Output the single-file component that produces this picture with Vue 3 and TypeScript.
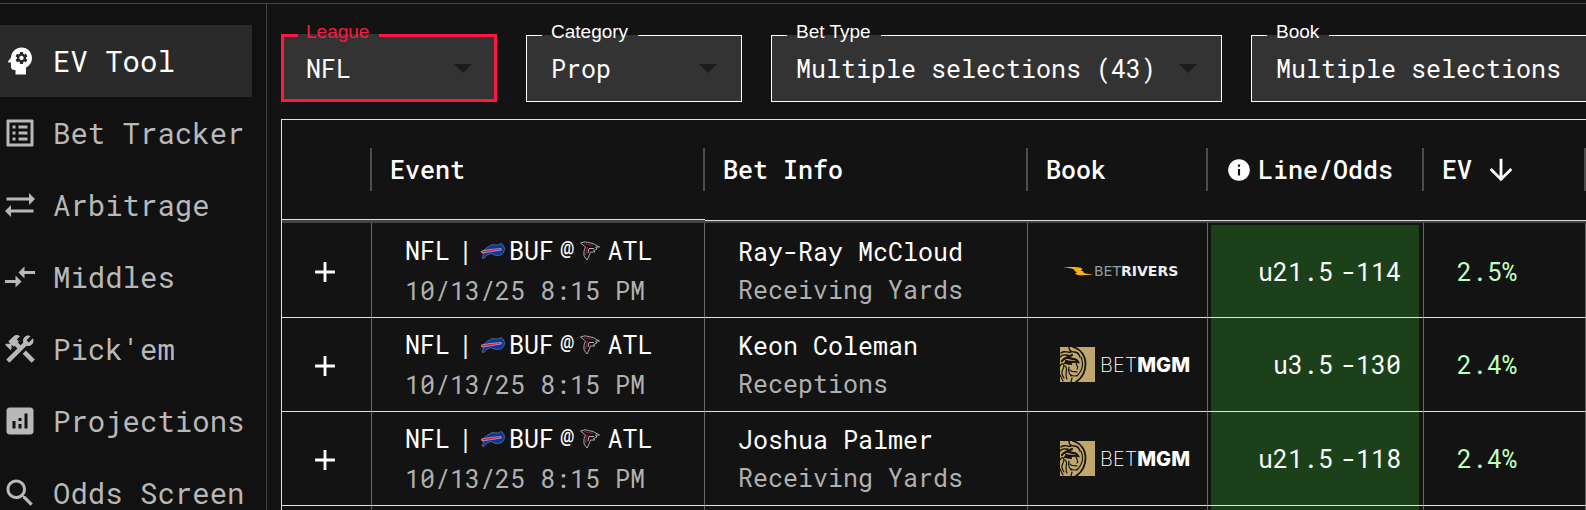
<script setup lang="ts">
interface NavItem {
  label: string
  paths: string[]
  active?: boolean
}

interface Filter {
  id: string
  label: string
  value: string
  wide?: boolean
  focused?: boolean
}

interface Bet {
  player: string
  market: string
  book: 'betrivers' | 'betmgm'
  line: string
  odds: string
  ev: string
}

const nav: NavItem[] = [
  {
    label: 'EV Tool',
    active: true,
    paths: [
      'M13 8.57c-.79 0-1.43.64-1.43 1.43s.64 1.43 1.43 1.43 1.43-.64 1.43-1.43-.64-1.43-1.43-1.43z',
      'M13 3C9.25 3 6.2 5.94 6.02 9.64L4.1 12.2c-.25.33-.01.8.4.8H6v3c0 1.1.9 2 2 2h1v3h7v-4.68c2.36-1.12 4-3.53 4-6.32 0-3.87-3.13-7-7-7zm3 7c0 .13-.01.26-.02.39l.83.66c.08.06.1.16.05.25l-.8 1.39c-.05.09-.16.12-.24.09l-.99-.4c-.21.16-.43.29-.67.39L14 13.83c-.01.1-.1.17-.2.17h-1.6c-.1 0-.18-.07-.2-.17l-.15-1.06c-.25-.1-.47-.23-.68-.39l-.99.4c-.09.03-.2 0-.25-.09l-.8-1.39c-.05-.08-.03-.19.05-.25l.84-.66c-.01-.13-.02-.26-.02-.39s.02-.27.04-.39l-.85-.66c-.08-.06-.1-.16-.05-.26l.8-1.38c.05-.09.15-.12.24-.09l1 .4c.2-.15.43-.29.67-.39L12 6.17c.02-.1.1-.17.2-.17h1.6c.1 0 .18.07.2.17l.15 1.06c.24.1.46.23.67.39l1-.4c.09-.03.2 0 .24.09l.8 1.38c.05.09.03.2-.05.26l-.85.66c.03.12.04.25.04.39z',
    ],
  },
  {
    label: 'Bet Tracker',
    paths: [
      'M19 5v14H5V5h14m1.1-2H3.9c-.5 0-.9.4-.9.9v16.2c0 .4.4.9.9.9h16.2c.4 0 .9-.5.9-.9V3.9c0-.5-.5-.9-.9-.9zM11 7h6v2h-6V7zm0 4h6v2h-6v-2zm0 4h6v2h-6zM7 7h2v2H7zm0 4h2v2H7zm0 4h2v2H7z',
    ],
  },
  { label: 'Arbitrage', paths: ['M22 8l-4-4v3H3v2h15v3l4-4zM2 16l4 4v-3h15v-2H6v-3l-4 4z'] },
  {
    label: 'Middles',
    paths: ['M9.01 14H2v2h7.01v3L13 15l-3.99-4v3zm5.98-1v-3H22V8h-7.01V5L11 9l3.99 4z'],
  },
  {
    label: "Pick'em",
    paths: [
      'm13.783 15.172 2.121-2.121 5.996 5.996-2.121 2.121zM17.5 10c1.93 0 3.5-1.57 3.5-3.5 0-.58-.16-1.12-.41-1.6l-2.7 2.7-1.49-1.49 2.7-2.7c-.48-.25-1.02-.41-1.6-.41C15.57 3 14 4.57 14 6.5c0 .41.08.8.21 1.16l-1.85 1.85-1.78-1.78.71-.71-1.41-1.41L12 3.49c-1.17-1.17-3.07-1.17-4.24 0L4.22 7.03l1.41 1.41H2.81l-.71.71 3.54 3.54.71-.71V9.15l1.41 1.41.71-.71 1.78 1.78-7.41 7.41 2.12 2.12L16.34 9.79c.36.13.75.21 1.16.21z',
    ],
  },
  {
    label: 'Projections',
    paths: [
      'M19 3H5c-1.1 0-2 .9-2 2v14c0 1.1.9 2 2 2h14c1.1 0 2-.9 2-2V5c0-1.1-.9-2-2-2zM9 17H7v-5h2v5zm4 0h-2v-3h2v3zm0-5h-2v-2h2v2zm4 5h-2V7h2v10z',
    ],
  },
  {
    label: 'Odds Screen',
    paths: [
      'M15.5 14h-.79l-.28-.27C15.41 12.59 16 11.11 16 9.5 16 5.91 13.09 3 9.5 3S3 5.91 3 9.5 5.91 16 9.5 16c1.61 0 3.09-.59 4.23-1.57l.27.28v.79l5 4.99L20.49 19l-4.99-5zm-6 0C7.01 14 5 11.99 5 9.5S7.01 5 9.5 5 14 7.01 14 9.5 11.99 14 9.5 14z',
    ],
  },
]

const filters: Filter[] = [
  { id: 'league', label: 'League', value: 'NFL', focused: true },
  { id: 'category', label: 'Category', value: 'Prop' },
  { id: 'bet-type', label: 'Bet Type', value: 'Multiple selections (43)', wide: true },
  { id: 'book', label: 'Book', value: 'Multiple selections', wide: true },
]

const bets: Bet[] = [
  { player: 'Ray-Ray McCloud', market: 'Receiving Yards', book: 'betrivers', line: 'u21.5', odds: '-114', ev: '2.5%' },
  { player: 'Keon Coleman', market: 'Receptions', book: 'betmgm', line: 'u3.5', odds: '-130', ev: '2.4%' },
  { player: 'Joshua Palmer', market: 'Receiving Yards', book: 'betmgm', line: 'u21.5', odds: '-118', ev: '2.4%' },
]
</script>

<template>
  <div class="app">
    <nav class="sidebar">
      <a v-for="item in nav" :key="item.label" href="#" class="nav-item" :class="{ active: item.active }">
        <svg class="nav-icon" viewBox="0 0 24 24" aria-hidden="true">
          <path v-for="d in item.paths" :key="d" :d="d" />
        </svg>
        <span>{{ item.label }}</span>
      </a>
    </nav>

    <main class="content">
      <form class="filters">
        <fieldset v-for="f in filters" :key="f.id" class="filter" :class="{ wide: f.wide, focused: f.focused }">
          <legend><label :for="f.id">{{ f.label }}</label></legend>
          <div class="control">
            <select :id="f.id">
              <option>{{ f.value }}</option>
            </select>
            <svg class="caret" viewBox="0 0 18 9" aria-hidden="true"><path d="M0 0h18l-9 9z" /></svg>
          </div>
        </fieldset>
      </form>

      <table class="grid">
        <colgroup>
          <col class="c-expand" />
          <col class="c-event" />
          <col class="c-info" />
          <col class="c-book" />
          <col class="c-odds" />
          <col />
        </colgroup>
        <thead>
          <tr>
            <th class="pinned"><div class="head"></div></th>
            <th class="pinned"><div class="head">Event</div></th>
            <th><div class="head">Bet Info</div></th>
            <th><div class="head">Book</div></th>
            <th>
              <div class="head with-info">
                <svg class="info" viewBox="0 0 24 24" aria-hidden="true">
                  <path d="M12 2C6.48 2 2 6.48 2 12s4.48 10 10 10 10-4.48 10-10S17.52 2 12 2zm1 15h-2v-6h2v6zm0-8h-2V7h2v2z" />
                </svg>
                Line/Odds
              </div>
            </th>
            <th>
              <div class="head sorted">
                EV
                <svg class="sort" viewBox="0 0 24 24" aria-hidden="true">
                  <path d="m20 12-1.41-1.41L13 16.17V4h-2v12.17l-5.58-5.59L4 12l8 8 8-8z" />
                </svg>
              </div>
            </th>
          </tr>
        </thead>
        <tbody>
          <tr v-for="bet in bets" :key="bet.player">
            <td class="expand">
              <button type="button" aria-label="Expand row">
                <svg viewBox="0 0 24 24" aria-hidden="true"><path d="M19 13h-6v6h-2v-6H5v-2h6V5h2v6h6v2z" /></svg>
              </button>
            </td>
            <td>
              <div class="event">
                <div class="match">
                  <span>NFL</span>
                  <span class="bar">|</span>
                  <svg class="bills" viewBox="0 0 24 16" aria-hidden="true">
                    <path d="M0.500 9 6 4.500 11 1.500 17 2 20 0.500 22 2 23.500 5 23 9 20 12 15 12.500 10 10.500 6 12 3 15.500 1 15 3 11z" fill="#07389a" stroke="#8f9db5" stroke-width=".5" />
                    <path d="M.5 8 9 6.500 20 5.500 20.500 7 11 8.500 1 10z" fill="#d9153b" stroke="#e8e8f0" stroke-width=".5" />
                  </svg>
                  <span>BUF</span>
                  <span class="at">@</span>
                  <svg class="falcons" viewBox="0 0 20 20" aria-hidden="true">
                    <path d="M.5 2 5 .8 13 2.500 19.500 6 15.500 6 17 8 13.500 9.500 15 11 10.500 11 9 15 7 19 4 15 4 10 5.500 6z" fill="#111" stroke="#ccc" stroke-width=".8" />
                    <path d="M4 2.500 13 4.500M7.500 6 5.500 14" fill="none" stroke="#9b1c35" stroke-width="1.200" />
                    <path d="M9 7.500 14 7.500M9 7.500 8 12" fill="none" stroke="#ddd" stroke-width=".8" />
                  </svg>
                  <span>ATL</span>
                </div>
                <div class="muted">10/13/25 8:15 PM</div>
              </div>
            </td>
            <td>
              <div class="bet-info">
                <div>{{ bet.player }}</div>
                <div class="muted">{{ bet.market }}</div>
              </div>
            </td>
            <td>
              <div v-if="bet.book === 'betrivers'" class="logo rivers">
                <svg viewBox="0 0 30 9" aria-hidden="true">
                  <path d="M0 .3C8-.2 17 0 19 1.500c1 .8-1 1.700-1 2.200 1 .3 3 .4 2.500 1.300C20 6 22 6.800 30 7.300 23 8.500 14 8.600 12.500 7c-.8-.9 1.500-1.500 1.500-2-.8-.4-3.200-.5-2.500-1.500C12.200 2.300 8 1 0 .3z" fill="#fbb01c" />
                </svg>
                <span class="rivers-text">BET<b>RIVERS</b></span>
              </div>
              <div v-else class="logo mgm">
                <svg viewBox="0 0 35 35" aria-hidden="true">
                  <path d="M0 0h35v35H0z" fill="#c2a76d" />
                  <g fill="none" stroke="#151411" stroke-linecap="round">
                    <path d="M13 0C21 2 25.500 9 25.500 17S22 31 16 35" stroke-width="1.800" />
                    <path d="M1 6C4 3 7 6 11 5M9 0c0 3 2 5 5 5 3 0 5 2 6 5M0 10c3-4 6-1 8-2" stroke-width="1.400" />
                    <path d="M2 14c4-6 8-2 12-2 2 0 3 1 4 3-5-1-8 1-12-1M4 12l8-4M5 16l6 1" stroke-width="2.200" />
                    <path d="M0 19c3-5 5-1 3 3s-1 6 1 9M5 19c4 2-1 7 2 13M9 20c-1 4 0 7 2 9M10 23c2 3 5 1 7 2M16 16c1 3 3 5 1 6M11 28c3 2 5 1 7 0M21 10c3 7 1 14-4 19M0 28l3 6M12 31l-1 4" stroke-width="1.200" />
                  </g>
                </svg>
                <span class="mgm-text">BET<b>MGM</b></span>
              </div>
            </td>
            <td class="odds">
              <div class="odds-box">
                <span>{{ bet.line }}</span>
                <span>{{ bet.odds }}</span>
              </div>
            </td>
            <td class="ev">{{ bet.ev }}</td>
          </tr>
          <tr>
            <td></td>
            <td></td>
            <td></td>
            <td></td>
            <td class="odds"><div class="odds-box"></div></td>
            <td></td>
          </tr>
        </tbody>
      </table>
    </main>
  </div>
</template>

<style>
body {
  background: #131313;
  overflow: hidden;
}
</style>

<style scoped>
.app {
  box-sizing: border-box;
  display: flex;
  height: 100vh;
  margin-top: 3px;
  border-top: 1px solid #444;
  overflow: hidden;
  background: #131313;
  color: #fff;
  font-family: 'Roboto Mono', 'DejaVu Sans Mono', monospace;
  font-size: 25px;
}
.sidebar {
  box-sizing: border-box;
  flex: 0 0 267px;
  padding: 21px 14px 0 0;
  border-right: 1px solid #444;
  background: #111;
}
.nav-item {
  display: flex;
  align-items: center;
  gap: 15px;
  height: 72px;
  padding-left: 2px;
  color: #b8b8b8;
  font-size: 29px;
  text-decoration: none;
  white-space: nowrap;
}
.nav-item.active {
  background: #2a2a2a;
  color: #fff;
}
.nav-icon {
  flex: none;
  width: 36px;
  height: 36px;
  fill: currentColor;
}
.content {
  flex: 1;
  min-width: 0;
  padding-left: 14px;
}
.filters {
  display: flex;
  gap: 29px;
  padding-top: 16px;
}
.filter {
  box-sizing: border-box;
  flex: 0 0 216px;
  min-width: 0;
  margin: 0;
  padding: 0 24px 16px;
  border: 1px solid #fff;
  background: #333;
}
.filter.wide {
  flex-basis: 451px;
}
.filter.focused {
  padding: 0 22px 14px;
  border: 3px solid #ff1744;
}
legend {
  margin-left: -9px;
  padding: 0 10px 7px 9px;
  font: 19px/24px 'Liberation Sans', Arial, sans-serif;
}
.focused legend {
  margin-left: -8px;
  padding-left: 8px;
  color: #ff1744;
}
legend label {
  display: block;
}
.control {
  display: flex;
  align-items: center;
}
.control select {
  flex: 1;
  min-width: 0;
  height: 34px;
  padding: 0;
  border: 0;
  outline: 0;
  appearance: none;
  background: transparent;
  color: #fff;
  font: inherit;
}
.caret {
  flex: none;
  width: 18px;
  height: 9px;
  fill: #1b1b1b;
}
.grid {
  width: 100%;
  margin-top: 17px;
  border-top: 1px solid #e0e0e0;
  border-left: 1px solid #e0e0e0;
  border-spacing: 0;
  table-layout: fixed;
}
.c-expand {
  width: 90px;
}
.c-event {
  width: 333px;
}
.c-info {
  width: 323px;
}
.c-book {
  width: 180px;
}
.c-odds {
  width: 216px;
}
th {
  box-sizing: border-box;
  height: 103px;
  padding: 0 0 2px;
  border-bottom: 2px solid #444;
  box-shadow: inset 0 -1px #e0e0e0;
  font-weight: 500;
  text-align: left;
}
th.pinned {
  border-bottom-width: 3px;
}
.head {
  box-sizing: border-box;
  display: flex;
  align-items: center;
  height: 43px;
  padding-left: 18px;
  border-right: 2px solid #4c4c4c;
  white-space: nowrap;
}
.with-info {
  gap: 6px;
}
.info {
  width: 26px;
  height: 26px;
  fill: currentColor;
}
.sorted {
  gap: 12px;
}
.sort {
  width: 34px;
  height: 34px;
  fill: currentColor;
}
td {
  box-sizing: border-box;
  height: 94px;
  padding: 0;
  border-right: 1px solid #666;
  border-bottom: 1px solid #e0e0e0;
  white-space: nowrap;
}
tbody tr:first-child td {
  height: 95px;
  padding-top: 2px;
}
td.expand {
  padding-right: 4px;
  text-align: center;
}
.expand button {
  width: 34px;
  height: 34px;
  padding: 0;
  border: 0;
  background: none;
  color: #fff;
  vertical-align: middle;
}
.expand svg {
  display: block;
  fill: currentColor;
}
.event,
.bet-info,
.ev {
  padding-left: 33px;
}
.event {
  line-height: 40px;
}
.bet-info {
  line-height: 38px;
}
.match {
  display: flex;
  align-items: center;
}
.bar {
  margin: 0 8px;
}
.at {
  margin: 0 6px;
  font-size: 24px;
  line-height: 36px;
  align-self: flex-start;
}
.bills {
  width: 24px;
  height: 16px;
  margin-right: 4px;
}
.falcons {
  width: 20px;
  height: 20px;
  margin-right: 7px;
}
.muted {
  color: #b0b0b0;
}
.logo {
  display: flex;
  align-items: center;
  padding-left: 32px;
}
.rivers {
  gap: 1px;
  padding-left: 35px;
}
.rivers svg {
  width: 30px;
  height: 9px;
}
.rivers-text {
  color: #999;
  font: 14px/16px 'DejaVu Sans', sans-serif;
}
.rivers-text b {
  color: #eee;
}
.mgm {
  gap: 5px;
}
.mgm svg {
  width: 35px;
  height: 35px;
}
.mgm-text {
  font: 200 20px/24px Inter, sans-serif;
}
.mgm-text b {
  font-weight: 800;
}
.odds-box {
  box-sizing: border-box;
  display: flex;
  align-items: center;
  justify-content: flex-end;
  gap: 8px;
  height: 100%;
  margin: 0 4px 0 3px;
  padding-right: 18px;
  background: #1c411a;
}
.ev {
  color: #bfffbf;
}
</style>
